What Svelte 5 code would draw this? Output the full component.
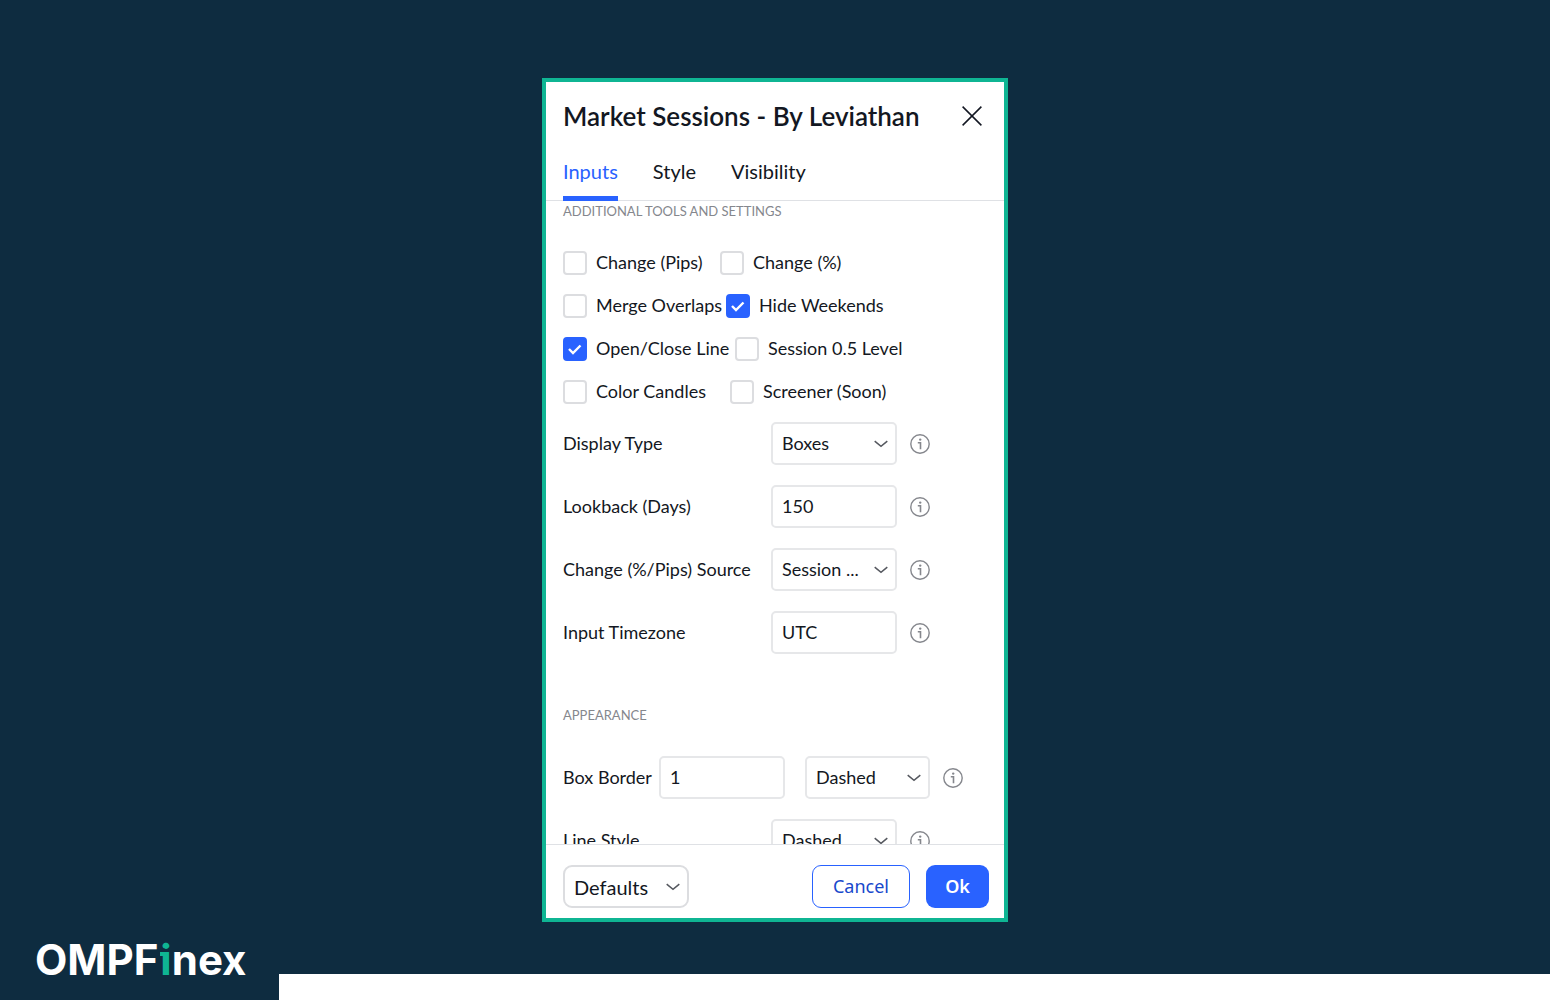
<script>
    const tabs = ['Inputs', 'Style', 'Visibility'];
    let active = $state('Inputs');

    let toggles = $state([
        { width: 157, items: [{ name: 'Change (Pips)', on: false }, { name: 'Change (%)', on: false }] },
        { width: 163, items: [{ name: 'Merge Overlaps', on: false }, { name: 'Hide Weekends', on: true }] },
        { width: 172, items: [{ name: 'Open/Close Line', on: true }, { name: 'Session 0.5 Level', on: false }] },
        { width: 167, items: [{ name: 'Color Candles', on: false }, { name: 'Screener (Soon)', on: false }] },
    ]);

    const fields = [
        { id: 'display', name: 'Display Type', options: ['Boxes'] },
        { id: 'lookback', name: 'Lookback (Days)', value: '150' },
        { id: 'source', name: 'Change (%/Pips) Source', options: ['Session ...'] },
        { id: 'timezone', name: 'Input Timezone', value: 'UTC' },
    ];
</script>

{#snippet info()}
    <button class="info" aria-label="Info">
        <svg width="20" height="20" viewBox="0 0 20 20" fill="none" stroke="#85878d">
            <circle cx="10" cy="10" r="9.2" stroke-width="1.4" />
            <path d="M7.8 8.7h2.7v6.6" stroke-width="1.6" />
            <circle cx="10.2" cy="5.6" r="1.2" fill="#85878d" stroke="none" />
        </svg>
    </button>
{/snippet}

{#snippet dropdown(id, options, label)}
    <span class="select">
        <select {id} aria-label={label}>
            {#each options as option}
                <option>{option}</option>
            {/each}
        </select>
        <svg width="14" height="8" viewBox="0 0 14 8" fill="none" stroke="#55585f" stroke-width="1.5">
            <path d="M.7 1.2 7 6.4l6.3-5.2" />
        </svg>
    </span>
{/snippet}

<div class="page">
    <main>
        <div class="dialog" role="dialog" aria-labelledby="title">
            <header>
                <h1 id="title">Market Sessions - By Leviathan</h1>
                <button class="close" aria-label="Close">
                    <svg width="20" height="20" viewBox="0 0 20 20" stroke="#131722" stroke-width="1.5">
                        <path d="M.6.6l18.8 18.8M19.4.6.6 19.4" />
                    </svg>
                </button>
            </header>

            <nav>
                {#each tabs as tab}
                    <button class:active={active === tab} onclick={() => (active = tab)}>{tab}</button>
                {/each}
            </nav>

            <div class="body">
                <h2>Additional tools and settings</h2>
                <div class="toggles">
                    {#each toggles as row}
                        <div class="toggle-row" style:--first="{row.width}px">
                            {#each row.items as item}
                                <label>
                                    <input type="checkbox" bind:checked={item.on} />
                                    <svg width="24" height="24" viewBox="0 0 24 24" fill="none" stroke="#fff" stroke-width="2.4">
                                        <path d="M6 12l4 4 7.5-7.5" />
                                    </svg>
                                    <span>{item.name}</span>
                                </label>
                            {/each}
                        </div>
                    {/each}
                </div>

                <div class="fields">
                    {#each fields as field}
                        <div class="field">
                            <label for={field.id}>{field.name}</label>
                            {#if field.options}
                                {@render dropdown(field.id, field.options)}
                            {:else}
                                <input class="text" type="text" id={field.id} value={field.value} />
                            {/if}
                            {@render info()}
                        </div>
                    {/each}
                </div>

                <h2>Appearance</h2>
                <div class="fields">
                    <div class="field pair">
                        <label for="border">Box Border</label>
                        <input class="text" type="text" id="border" value="1" />
                        {@render dropdown('border-style', ['Dashed'], 'Box border style')}
                        {@render info()}
                    </div>
                    <div class="field">
                        <label for="line">Line Style</label>
                        {@render dropdown('line', ['Dashed'])}
                        {@render info()}
                    </div>
                </div>
            </div>

            <footer>
                <div class="defaults">
                    {@render dropdown('defaults', ['Defaults'], 'Defaults')}
                </div>
                <button class="cancel">Cancel</button>
                <button class="ok">Ok</button>
            </footer>
        </div>
    </main>

    <div class="brand">
        <div class="logo">OMPF<span>i</span>nex</div>
        <div class="strip"></div>
    </div>
</div>

<style>
    :global(body) {
        margin: 0;
        background: #0e2c40;
    }

    .page {
        box-sizing: border-box;
        height: 100vh;
        padding-top: 78px;
        display: flex;
        flex-direction: column;
        color: #131722;
        font-family: "Trebuchet MS", Lato, sans-serif;
        font-size: 18px;
    }

    main {
        flex: 1;
        min-height: 0;
        display: flex;
        justify-content: center;
    }

    button,
    input,
    select {
        box-sizing: border-box;
        margin: 0;
        color: inherit;
        font: inherit;
    }

    button {
        padding: 0;
        border: 0;
        background: none;
        cursor: pointer;
    }

    svg {
        display: block;
    }

    .dialog {
        box-sizing: border-box;
        width: 466px;
        max-width: 100%;
        display: flex;
        flex-direction: column;
        border: 4px solid #0fb593;
        background: #fff;
    }

    header {
        height: 68px;
        padding: 0 22px 0 17px;
        display: flex;
        align-items: center;
        justify-content: space-between;
    }

    h1 {
        margin: 0;
        font-size: 26px;
        font-weight: 600;
    }

    nav {
        height: 50px;
        padding: 0 17px;
        display: flex;
        gap: 35px;
        border-bottom: 1px solid #dfe1e5;
    }

    nav button {
        height: 51px;
        padding-bottom: 5px;
        box-sizing: border-box;
        border-bottom: 5px solid transparent;
        font-size: 20px;
    }

    nav .active {
        border-color: #2962ff;
        color: #2962ff;
    }

    .body {
        flex: 1;
        min-height: 0;
        padding: 0 17px;
        overflow: auto;
        scrollbar-width: none;
    }

    h2 {
        margin: 0;
        color: #85878d;
        font-size: 13px;
        font-weight: 400;
        line-height: 20px;
        text-transform: uppercase;
    }

    .toggles {
        margin: 20px 0 9px;
    }

    .toggle-row {
        height: 43px;
        display: grid;
        grid-template-columns: var(--first) 1fr;
        align-items: center;
    }

    .toggle-row label {
        display: flex;
        align-items: center;
        gap: 9px;
        white-space: nowrap;
    }

    .toggle-row span,
    .field label {
        padding-bottom: 1px;
    }

    .toggle-row input {
        appearance: none;
        width: 24px;
        height: 24px;
        border: 2px solid #dcdde0;
        border-radius: 4px;
    }

    .toggle-row input:checked {
        border-color: #2962ff;
        background: #2962ff;
    }

    /* the tick lies over its box */
    .toggle-row svg {
        margin-left: -33px;
        pointer-events: none;
    }

    .fields {
        display: flex;
        flex-direction: column;
        gap: 20px;
    }

    .fields + h2 {
        margin: 51px 0 31px;
    }

    .field {
        display: grid;
        grid-template-columns: 208px 126px 20px;
        align-items: center;
    }

    .pair {
        grid-template-columns: 96px 126px 145px 20px;
    }

    .pair .select {
        margin-left: 20px;
    }

    .info {
        width: 20px;
        margin-left: 13px;
    }

    .text,
    select {
        width: 100%;
        height: 43px;
        padding: 0 9px 2px;
        border: 2px solid #e6e7e9;
        border-radius: 5px;
        background: #fff;
    }

    .select {
        position: relative;
    }

    select {
        appearance: none;
        display: block;
    }

    .select svg {
        position: absolute;
        top: 18px;
        right: 9px;
        pointer-events: none;
    }

    footer {
        padding: 20px 15px 10px 17px;
        display: flex;
        gap: 16px;
        border-top: 1px solid #dfe1e5;
    }

    .defaults {
        width: 126px;
        margin-right: auto;
        font-size: 20px;
    }

    .defaults select {
        padding-bottom: 0;
        border-color: #dcdde0;
        border-radius: 9px;
    }

    footer button {
        height: 43px;
        padding-bottom: 2px;
        border-radius: 9px;
        font-family: "Noto Sans", sans-serif;
    }

    .cancel {
        width: 98px;
        border: 1px solid #2962ff;
        color: #1848cc;
    }

    .ok {
        width: 63px;
        background: #2962ff;
        color: #fff;
        font-weight: 600;
    }

    .brand {
        height: 78px;
        display: flex;
        align-items: flex-end;
    }

    .logo {
        box-sizing: border-box;
        width: 279px;
        padding: 0 0 14px 35px;
        color: #fff;
        font-family: Inter, sans-serif;
        font-size: 42px;
        font-weight: 700;
        line-height: 52px;
    }

    .logo span {
        position: relative;
        margin-left: 2px;
        color: #0fb593;
    }

    /* slab on the left of the green letter */
    .logo span::before {
        content: "";
        position: absolute;
        top: 18px;
        left: 0;
        width: 5px;
        height: 4px;
        background: #0fb593;
    }

    .strip {
        flex: 1;
        height: 26px;
        background: #fff;
    }
</style>
